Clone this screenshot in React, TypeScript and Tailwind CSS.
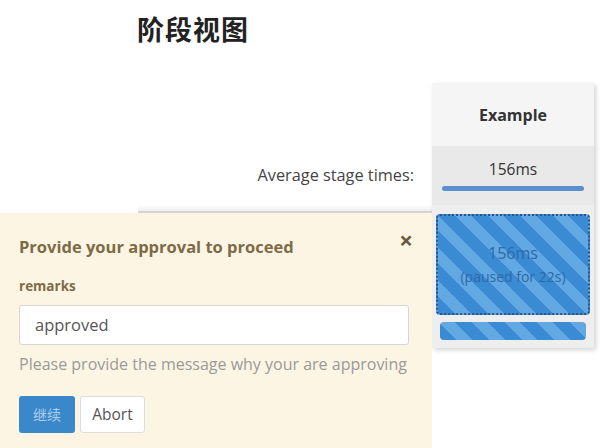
import React from "react";

export default function App() {
  const sans = { fontFamily: '"Open Sans","Noto Sans CJK SC",sans-serif' };
  const stripes =
    "bg-[repeating-linear-gradient(45deg,#3a8ad4_0px,#3a8ad4_12px,#62a8e3_12px,#62a8e3_23px)]";
  return (
    <div className="relative w-[600px] h-[448px] overflow-hidden bg-white text-[#333]" style={sans}>
      <div className="pl-[137px] pt-[11px] h-[83px]">
        <h1 className="text-[27px] font-bold leading-[36px] text-[#222] tracking-[1px]" style={{ fontFamily: '"Noto Sans CJK SC",sans-serif' }}>
          阶段视图
        </h1>
      </div>
      <div className="flex">
        <div className="w-[432px] flex flex-col">
          <div className="h-[63px]" />
          <div className="h-[59px] flex items-center justify-end pr-[18px] text-[16.3px] text-[#444]">
            Average stage times:
          </div>
          <div className="ml-[138px] h-[6px] bg-gradient-to-b from-white to-[#eeeeee]" />
          <div className="ml-[138px] h-[3px] bg-[#d4d4d4]" />
        </div>
        <div className="w-[162px] flex flex-col bg-[#f7f7f7] shadow-[2px_2px_5px_rgba(0,0,0,0.18)] rounded-[2px]">
          <div className="h-[63px] flex items-center justify-center bg-[#f5f5f5] text-[16px] font-bold text-[#333]">
            Example
          </div>
          <div className="h-[59px] bg-[#e9e9e9] flex flex-col items-center pt-[12px]">
            <div className="text-[15.5px] text-[#333] leading-[22px]">156ms</div>
            <div className="mt-[6px] w-[142px] h-[5px] rounded-full bg-[#5b8fd0]" />
          </div>
          <div className="px-[4px] pt-[9px] pb-[8px] bg-[#eeeeee]">
            <div className={`h-[101px] rounded-[4px] border-2 border-dotted border-[#2a5584] ${stripes} flex flex-col items-center justify-center text-[#2c6aa5]`}>
              <div className="text-[16px] leading-[24px]">156ms</div>
              <div className="text-[14px] leading-[24px]">(paused for 22s)</div>
            </div>
            <div className={`mt-[7px] mx-[4px] h-[18px] rounded-[4px] ${stripes}`} />
          </div>
        </div>
      </div>

      <div className="absolute left-0 top-[213px] w-[432px] h-[235px] bg-[#fcf5e4] pl-[19px] pr-[20px]">
        <div className="flex items-start justify-between pt-[22px]">
          <div className="text-[16.5px] font-bold text-[#7d6b46] leading-[24px]">Provide your approval to proceed</div>
          <div className="text-[24px] font-bold text-[#6b5a3a] leading-[20px] -mt-[5px] -mr-[1px]">×</div>
        </div>
        <div className="mt-[18px] text-[13.5px] font-bold text-[#7d6b46] leading-[18px]">remarks</div>
        <div className="mt-[10px] w-[390px] h-[40px] bg-white border border-[#d6d6d6] rounded-[3px] flex items-center pl-[15px] text-[16.5px] text-[#555]">
          approved
        </div>
        <div className="mt-[7px] text-[16px] text-[#9a9a9a] leading-[24px] whitespace-nowrap">
          Please provide the message why your are approving
        </div>
        <div className="mt-[20px] flex gap-[5px]">
          <div className="w-[56px] h-[37px] rounded-[3px] bg-[#3a88c9] text-[#a9cdee] text-[14px] flex items-center justify-center" style={{ fontFamily: '"Noto Sans CJK SC",sans-serif' }}>
            继续
          </div>
          <div className="w-[65px] h-[37px] rounded-[3px] bg-white border border-[#dcdcdc] text-[#555] text-[15.5px] flex items-center justify-center">
            Abort
          </div>
        </div>
      </div>
    </div>
  );
}
